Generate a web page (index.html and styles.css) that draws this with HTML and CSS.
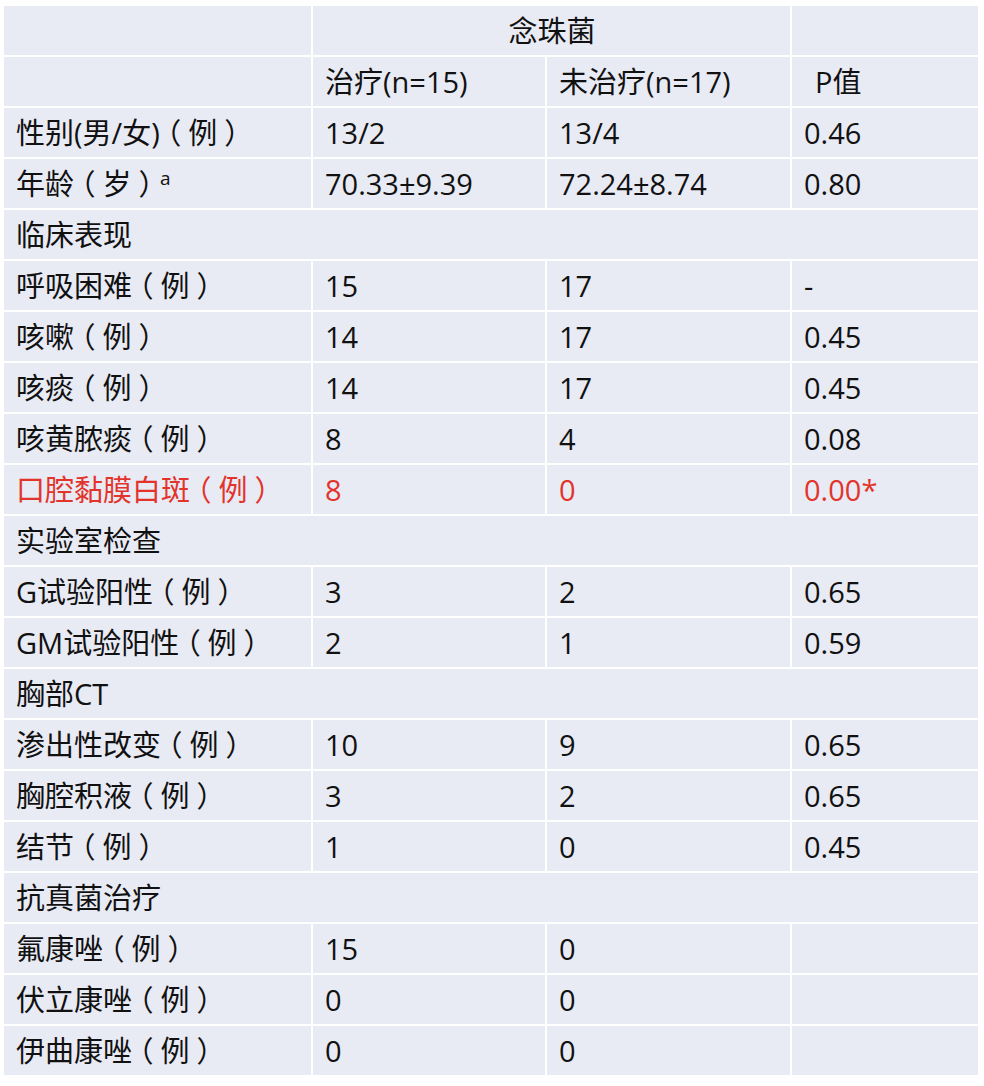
FILE: index.html
```html
<!DOCTYPE html>
<html lang="zh-CN">
<head>
<meta charset="utf-8">
<title>念珠菌</title>
<link rel="stylesheet" href="styles.css">
</head>
<body>
<table class="data">
  <colgroup>
    <col class="c1"><col class="c2"><col class="c3"><col class="c4">
  </colgroup>
  <tbody>
    <tr><td></td><td colspan="2" class="center">念珠菌</td><td></td></tr>
    <tr><td></td><td>治疗(n=15)</td><td>未治疗(n=17)</td><td class="indent">P值</td></tr>
    <tr><td>性别(男/女)<span class="lp">（</span>例<span class="rp">）</span></td><td>13/2</td><td>13/4</td><td>0.46</td></tr>
    <tr><td>年龄<span class="lp">（</span>岁<span class="rp">）</span><sup class="sup">a</sup></td><td>70.33±9.39</td><td>72.24±8.74</td><td>0.80</td></tr>
    <tr><td colspan="4">临床表现</td></tr>
    <tr><td>呼吸困难<span class="lp">（</span>例<span class="rp">）</span></td><td>15</td><td>17</td><td>-</td></tr>
    <tr><td>咳嗽<span class="lp">（</span>例<span class="rp">）</span></td><td>14</td><td>17</td><td>0.45</td></tr>
    <tr><td>咳痰<span class="lp">（</span>例<span class="rp">）</span></td><td>14</td><td>17</td><td>0.45</td></tr>
    <tr><td>咳黄脓痰<span class="lp">（</span>例<span class="rp">）</span></td><td>8</td><td>4</td><td>0.08</td></tr>
    <tr class="hl"><td>口腔黏膜白斑<span class="lp">（</span>例<span class="rp">）</span></td><td>8</td><td>0</td><td>0.00*</td></tr>
    <tr><td colspan="4">实验室检查</td></tr>
    <tr><td>G试验阳性<span class="lp">（</span>例<span class="rp">）</span></td><td>3</td><td>2</td><td>0.65</td></tr>
    <tr><td>GM试验阳性<span class="lp">（</span>例<span class="rp">）</span></td><td>2</td><td>1</td><td>0.59</td></tr>
    <tr><td colspan="4">胸部CT</td></tr>
    <tr><td>渗出性改变<span class="lp">（</span>例<span class="rp">）</span></td><td>10</td><td>9</td><td>0.65</td></tr>
    <tr><td>胸腔积液<span class="lp">（</span>例<span class="rp">）</span></td><td>3</td><td>2</td><td>0.65</td></tr>
    <tr><td>结节<span class="lp">（</span>例<span class="rp">）</span></td><td>1</td><td>0</td><td>0.45</td></tr>
    <tr><td colspan="4">抗真菌治疗</td></tr>
    <tr><td>氟康唑<span class="lp">（</span>例<span class="rp">）</span></td><td>15</td><td>0</td><td></td></tr>
    <tr><td>伏立康唑<span class="lp">（</span>例<span class="rp">）</span></td><td>0</td><td>0</td><td></td></tr>
    <tr><td>伊曲康唑<span class="lp">（</span>例<span class="rp">）</span></td><td>0</td><td>0</td><td></td></tr>
  </tbody>
</table>
</body>
</html>
```

FILE: styles.css
```css
html, body {
  margin: 0;
  padding: 0;
  background: #ffffff;
}

body {
  font-family: "Open Sans", "Noto Sans CJK SC", sans-serif;
  color: #111111;
}

.data {
  border-collapse: separate;
  border-spacing: 2px;
  margin: 4px 0 0 2px;
  table-layout: fixed;
  width: 978px;
  font-size: 29px;
}

.c1 { width: 307px; }
.c2 { width: 232px; }
.c3 { width: 243px; }
.c4 { width: 186px; }

.data td {
  background: #e8eaf4;
  height: 49px;
  padding: 0 11px 0 12px;
  box-sizing: border-box;
  vertical-align: middle;
  white-space: nowrap;
  line-height: 49px;
}

.data td.center {
  text-align: center;
}

.data td.indent {
  padding-left: 23px;
}

/* Full-width parentheses set half-width, then padded so the glyph sits
   centred in a full em box, as in the source font */
.lp,
.rp {
  font-feature-settings: "halt";
  padding: 0 0.24em;
}

.rp + .sup {
  margin-left: 0;
}

.sup {
  font-size: 19px;
  vertical-align: 10px;
  line-height: 0;
}

.hl td {
  color: #e2342b;
}
```
